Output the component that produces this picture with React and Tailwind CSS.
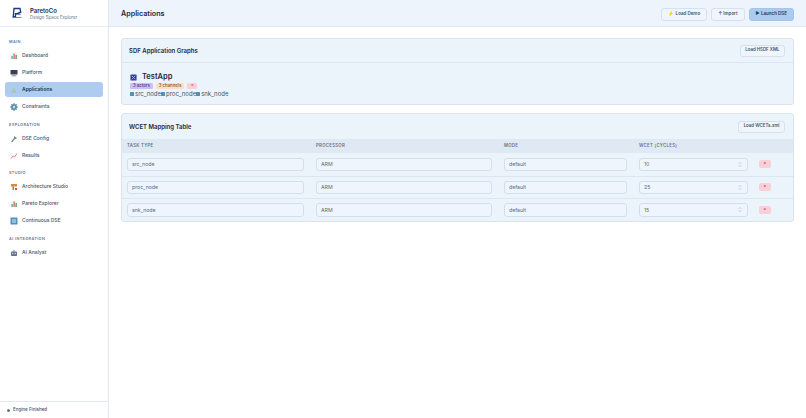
const Ico = ({ children }) => (
  <svg viewBox="0 0 16 16" className="w-[8px] h-[8px] shrink-0">{children}</svg>
);
const icons = {
  chart: <Ico><rect x="1" y="1" width="14" height="14" fill="#f1f5f9" /><rect x="3" y="8" width="2.5" height="6" fill="#4ca0b8" /><rect x="7" y="3" width="2.5" height="11" fill="#d4664f" /><rect x="11" y="6" width="2.5" height="8" fill="#5d8f4e" /></Ico>,
  monitor: <Ico><rect x="1" y="2" width="14" height="9" rx="1" fill="#374151" /><rect x="6" y="11" width="4" height="2" fill="#9ca3af" /><rect x="3" y="13" width="10" height="1.5" fill="#6b7280" /></Ico>,
  app: <Ico><path d="M2 14 L8 3 L14 14 Z" fill="#a8c7b8" /></Ico>,
  gear: <Ico><circle cx="8" cy="8" r="6" fill="#5f8fa8" /><circle cx="8" cy="8" r="2.4" fill="#cfe0ea" /><path d="M8 0v3M8 13v3M0 8h3M13 8h3M2.5 2.5l2 2M11.5 11.5l2 2M13.5 2.5l-2 2M4.5 11.5l-2 2" stroke="#5f8fa8" strokeWidth="2" /></Ico>,
  wrench: <Ico><path d="M3 14 L10 6" stroke="#7b8b9a" strokeWidth="2.5" /><path d="M9 2 L14 7 L11 8 L8 5 Z" fill="#64808f" /></Ico>,
  results: <Ico><rect x="1" y="1" width="14" height="14" fill="#f8fafc" /><path d="M2 13 L6 8 L9 10 L14 3" stroke="#d9705f" strokeWidth="1.6" fill="none" /></Ico>,
  arch: <Ico><rect x="2" y="2" width="12" height="5" fill="#d98b3a" /><rect x="5" y="7" width="3" height="7" fill="#c96f2c" /><rect x="10" y="10" width="4" height="4" fill="#d6503f" /></Ico>,
  cycle: <Ico><rect x="1" y="1" width="14" height="14" rx="1" fill="#4f93bd" /><path d="M4 6h8M12 10H4" stroke="#fff" strokeWidth="1.6" /></Ico>,
  robot: <Ico><rect x="2" y="5" width="12" height="9" rx="1.5" fill="#64748b" /><rect x="7" y="2" width="2" height="3" fill="#64748b" /><circle cx="5.5" cy="9" r="1.3" fill="#e2e8f0" /><circle cx="10.5" cy="9" r="1.3" fill="#e2e8f0" /></Ico>,
};

const sections = [
  { title: "MAIN", cls: "mt-[11px]", items: [["chart", "Dashboard"], ["monitor", "Platform"], ["app", "Applications", true], ["gear", "Constraints"]] },
  { title: "EXPLORATION", cls: "mt-[5px]", items: [["wrench", "DSE Config"], ["results", "Results"]] },
  { title: "STUDIO", cls: "mt-[4px]", items: [["arch", "Architecture Studio"], ["chart", "Pareto Explorer"], ["cycle", "Continuous DSE"]] },
  { title: "AI INTEGRATION", cls: "mt-[5px]", items: [["robot", "AI Analyst"]] },
];

const rows = [["src_node", "10"], ["proc_node", "25"], ["snk_node", "15"]];
const inputCls = "block w-full h-[13.5px] px-[4px] text-[5.2px] text-[#5b6b7f] bg-[#eff5fc] border border-[#d3deea] rounded-[3px] outline-none";
const gridCols = "grid grid-cols-[188px_188px_135px_121px_1fr]";

function Btn({ children, primary, tall }) {
  return (
    <button className={`${tall ? "h-[13px] px-[6px] text-[4.5px]" : "h-[12px] px-[4.5px] text-[4.4px]"} rounded-[3px] font-semibold border flex items-center gap-[2px] ${primary ? "bg-[#aacbee] border-[#a5c6ea] text-[#1e3a5f]" : "bg-[#eff5fc] border-[#d7e1ec] text-[#475569]"}`}>
      {children}
    </button>
  );
}

function Cell({ children, first }) {
  return <div className={`${first ? "pl-[5px]" : "pl-[6px]"} pr-[6px] flex items-center`}>{children}</div>;
}

export default function App() {
  return (
    <div className="flex w-full h-screen bg-white text-[#334155] overflow-hidden font-['Inter','Liberation_Sans',sans-serif]">
      <aside className="w-[109px] shrink-0 flex flex-col bg-white border-r border-[#e2e8f0]">
        <div className="h-[27px] flex items-center gap-[7px] pl-[11px] border-b border-[#e8edf3] shrink-0">
          <svg viewBox="0 0 16 16" className="w-[12px] h-[12px] shrink-0">
            <path d="M4 2 H12 L13 7 L8 9 H6 V13 H3 Z" fill="none" stroke="#1e3a7a" strokeWidth="1.8" />
            <path d="M7 10 L13 10 M2 14 H14" stroke="#4f7fc4" strokeWidth="1.2" />
          </svg>
          <div className="flex flex-col leading-none">
            <span className="text-[6px] font-semibold text-[#1e293b] leading-[8px]">ParetoCo</span>
            <span className="text-[4.4px] text-[#64748b] leading-[5px]">Design Space Explorer</span>
          </div>
        </div>
        <nav className="flex flex-col px-[5px]">
          {sections.map((s) => (
            <div key={s.title} className={`flex flex-col ${s.cls}`}>
              <div className="h-[7px] pl-[4px] mb-[3px] text-[3.8px] leading-[7px] font-semibold tracking-[0.4px] text-[#64748b]">{s.title}</div>
              {s.items.map(([ic, label, active]) => (
                <div key={label} className={`h-[15px] mb-[2px] flex items-center gap-[4px] pl-[5px] rounded-[3px] text-[5px] ${active ? "bg-[#aeccf0] text-[#1e3a5f] font-semibold" : "text-[#475569] font-medium"}`}>
                  {icons[ic]}
                  <span>{label}</span>
                </div>
              ))}
            </div>
          ))}
        </nav>
        <div className="mt-auto h-[17px] shrink-0 border-t border-[#e2e8f0] flex items-center gap-[3px] pl-[7px] text-[4.5px] font-medium text-[#475569]">
          <span className="w-[3px] h-[3px] rounded-full bg-[#64748b]" />
          Engine Finished
        </div>
      </aside>

      <main className="flex-1 flex flex-col min-w-0">
        <header className="h-[27px] shrink-0 flex items-center justify-between pt-[2px] px-[12px] bg-[#eef4fb] border-b border-[#dfe7f0]">
          <h1 className="text-[7.2px] font-semibold text-[#1e293b]">Applications</h1>
          <div className="flex gap-[4px]">
            <Btn tall><span className="text-[#eab308]">⚡</span>Load Demo</Btn>
            <Btn tall>↑ Import</Btn>
            <Btn tall primary>▶ Launch DSE</Btn>
          </div>
        </header>

        <div className="flex flex-col gap-[8px] pt-[11px] px-[12px]">
          <section className="h-[67px] bg-[#ebf3fb] border border-[#d9e4ef] rounded-[3px] flex flex-col">
            <div className="h-[24px] shrink-0 flex items-center justify-between pl-[7px] pr-[8px] border-b border-[#dbe6f0]">
              <h2 className="text-[6px] font-semibold text-[#1e293b]">SDF Application Graphs</h2>
              <Btn>Load HSDF XML</Btn>
            </div>
            <div className="flex flex-col pl-[8px] pt-[9px]">
              <div className="flex items-center gap-[5px] text-[7.5px] font-semibold text-[#1e293b] leading-[10px]">
                <svg viewBox="0 0 16 16" className="w-[7px] h-[7px]"><rect x="1" y="1" width="14" height="14" rx="2" fill="#3b3f8f" /><path d="M4 4 L12 12 M12 4 L4 12" stroke="#8fb4e8" strokeWidth="2" /></svg>
                TestApp
              </div>
              <div className="flex gap-[3px] mt-[1px]">
                <span className="h-[6px] px-[3px] rounded-[1.5px] bg-[#cdbcf2] text-[#4c3a8c] text-[4.3px] leading-[6px] font-medium">3 actors</span>
                <span className="h-[6px] px-[3px] rounded-[1.5px] bg-[#fbdfc8] text-[#8a5a2a] text-[4.3px] leading-[6px] font-medium">3 channels</span>
                <span className="h-[6px] w-[10px] rounded-[1.5px] bg-[#fbcfd8] text-[#c2415a] text-[3.8px] leading-[6px] text-center font-bold">×</span>
              </div>
              <div className="flex items-center text-[6px] leading-[8px] text-[#475569] mt-[1px]">
                {["src_node", "proc_node", "snk_node"].map((n) => (
                  <span key={n} className="flex items-center gap-[1.5px]">
                    <span className="w-[3.5px] h-[3.5px] bg-[#4e93b5] rounded-[0.5px]" />
                    {n}
                  </span>
                ))}
              </div>
            </div>
          </section>

          <section className="h-[109px] bg-[#ebf3fb] border border-[#d9e4ef] rounded-[3px] flex flex-col overflow-hidden">
            <div className="h-[25px] shrink-0 flex items-center justify-between pl-[7px] pr-[8px]">
              <h2 className="text-[6px] font-semibold text-[#1e293b]">WCET Mapping Table</h2>
              <Btn>Load WCETs.xml</Btn>
            </div>
            <div className={`${gridCols} h-[14px] shrink-0 bg-[#dfe9f3] text-[4.3px] font-semibold tracking-[0.3px] text-[#64748b]`}>
              {["TASK TYPE", "PROCESSOR", "MODE", "WCET (CYCLES)", ""].map((h, i) => (
                <Cell key={i} first={i === 0}>{h}</Cell>
              ))}
            </div>
            {rows.map(([name, w], i) => (
              <div key={name} className={`${gridCols} h-[22.6px] shrink-0 ${i ? "border-t border-[#dbe6f0]" : ""}`}>
                <Cell first><input readOnly value={name} className={inputCls} /></Cell>
                <Cell><input readOnly value="ARM" className={inputCls} /></Cell>
                <Cell><input readOnly value="default" className={inputCls} /></Cell>
                <Cell>
                  <div className="relative w-full">
                    <input readOnly value={w} className={inputCls} />
                    <svg viewBox="0 0 8 12" className="absolute right-[6px] top-[3.25px] w-[4px] h-[7px]">
                      <path d="M1.5 4.5 L4 2 L6.5 4.5 M1.5 7.5 L4 10 L6.5 7.5" fill="none" stroke="#94a3b8" strokeWidth="1" />
                    </svg>
                  </div>
                </Cell>
                <div className="flex items-center pl-[5px]">
                  <button className="w-[11.5px] h-[8px] rounded-[2px] bg-[#fbcfd8] text-[#c2415a] text-[4px] leading-[8px] font-bold text-center">×</button>
                </div>
              </div>
            ))}
          </section>
        </div>
      </main>
    </div>
  );
}
